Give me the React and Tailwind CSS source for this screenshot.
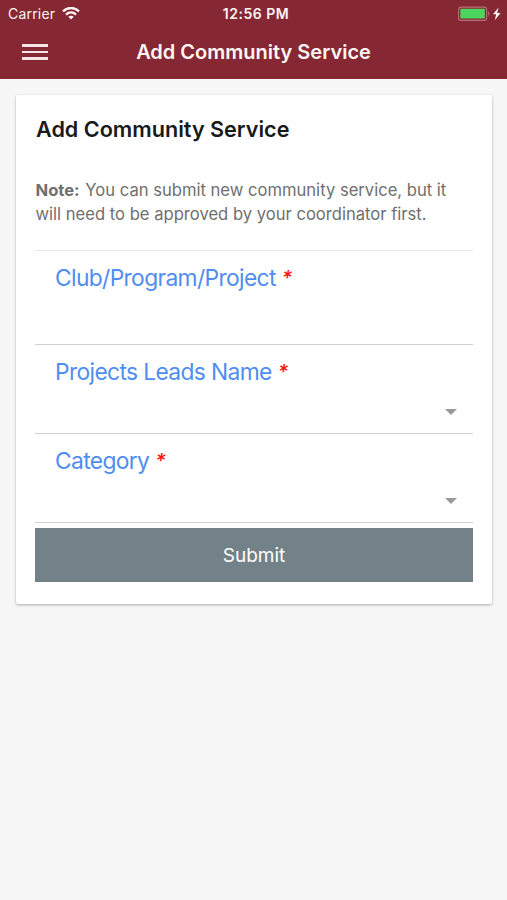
import React from 'react';

const WifiIcon = () => (
  <svg className="ml-[7px] h-[13px] w-[18px]" viewBox="0 0 18 13" fill="none" stroke="#fff5f5" strokeWidth="2.4">
    <path d="M1 4.3C5.5 -0.1 12.5 -0.1 17 4.3" />
    <path d="M4 7.6C6.9 4.8 11.1 4.8 14 7.6" />
    <path d="M9 12.4L6.3 9.7C7.9 8.3 10.1 8.3 11.7 9.7Z" fill="#fff5f5" stroke="none" />
  </svg>
);

const BatteryIcon = () => (
  <svg className="h-[16px] w-[44px]" viewBox="0 0 44 16">
    <rect x="0.6" y="1.1" width="28" height="13.3" rx="2.5" fill="none" stroke="#b5707a" strokeWidth="1.1" />
    <rect x="2.4" y="2.8" width="24.4" height="9.8" rx="0.8" fill="#4cd55f" />
    <path d="M30 5.6C31.8 6.2 31.8 9.2 30 9.8Z" fill="#b5707a" />
    <path d="M40.6 1.5L35 8.2H38.2L36.8 14.2L42.6 7H39.2Z" fill="#fff5f5" />
  </svg>
);

const Caret = () => (
  <svg className="h-[6px] w-[12px]" viewBox="0 0 12 6">
    <path d="M0 0H12L6 6Z" fill="#999999" />
  </svg>
);

const fields = [
  { label: 'Club/Program/Project', select: false, size: 'h-[94px]' },
  { label: 'Projects Leads Name', select: true, size: 'h-[89px]' },
  { label: 'Category', select: true, size: 'h-[89px]' },
];

const Field = ({ label, select, size }) => (
  <div className={`flex flex-col border-b border-[#cfcfcf] pl-5 pr-4 pt-[11px] ${size}`}>
    <label className="flex items-center text-[22.8px] leading-8 tracking-[-0.64px] text-[#4f8ef0]">
      {label}
      <span className="ml-[6px] text-[20px] font-medium italic text-[#ff1010]">*</span>
    </label>
    {select && (
      <div className="mt-[21px] flex justify-end">
        <Caret />
      </div>
    )}
  </div>
);

const App = () => {
  return (
    <div className="min-h-screen bg-[#f7f7f7] font-['Inter',sans-serif]">
      <header className="h-[79px] bg-[#852833] text-[#fff5f5]">
        <div className="grid h-[27px] grid-cols-3 items-center pl-[8px] pr-[5px] text-[14px]">
          <div className="flex items-center">
            <span className="tracking-[0.2px]">Carrier</span>
            <WifiIcon />
          </div>
          <span className="pl-[2px] text-center font-semibold tracking-[0.5px]">12:56 PM</span>
          <div className="flex justify-end">
            <BatteryIcon />
          </div>
        </div>
        <div className="grid h-[50px] grid-cols-[48px_1fr_48px] items-center">
          <button className="flex w-[26px] flex-col gap-[4px] justify-self-end" aria-label="Menu">
            <span className="h-[2.4px] bg-[#f8e4e6]" />
            <span className="h-[2.4px] bg-[#f8e4e6]" />
            <span className="h-[2.4px] bg-[#f8e4e6]" />
          </button>
          <h1 className="text-center text-[20px] font-semibold">Add Community Service</h1>
        </div>
      </header>

      <main className="pl-4 pr-[15px] pt-4">
        <div className="h-[509px] rounded-[2px] bg-white px-[19px] pt-5 shadow-[0_1px_3px_rgba(0,0,0,0.3)]">
          <h2 className="pl-px text-[21.6px] font-semibold leading-7 text-[#1a1a1a]">Add Community Service</h2>
          <p className="mt-[36px] whitespace-nowrap pl-[0.5px] text-[16.6px] leading-[23.5px] text-[#6f6f6f]">
            <b className="mr-[1px] font-bold">Note:</b> You can submit new community service, but it
            <br />
            will need to be approved by your coordinator first.
          </p>

          {/* Form */}
          <form className="mt-[24px] border-t border-[#e9e9e9]">
            {fields.map((f) => (
              <Field key={f.label} {...f} />
            ))}
            <button type="button" className="mt-[5px] h-[54px] w-full bg-[#738288] pt-[2px] text-[19px] text-white">
              Submit
            </button>
          </form>
        </div>
      </main>
    </div>
  );
};

export default App;
